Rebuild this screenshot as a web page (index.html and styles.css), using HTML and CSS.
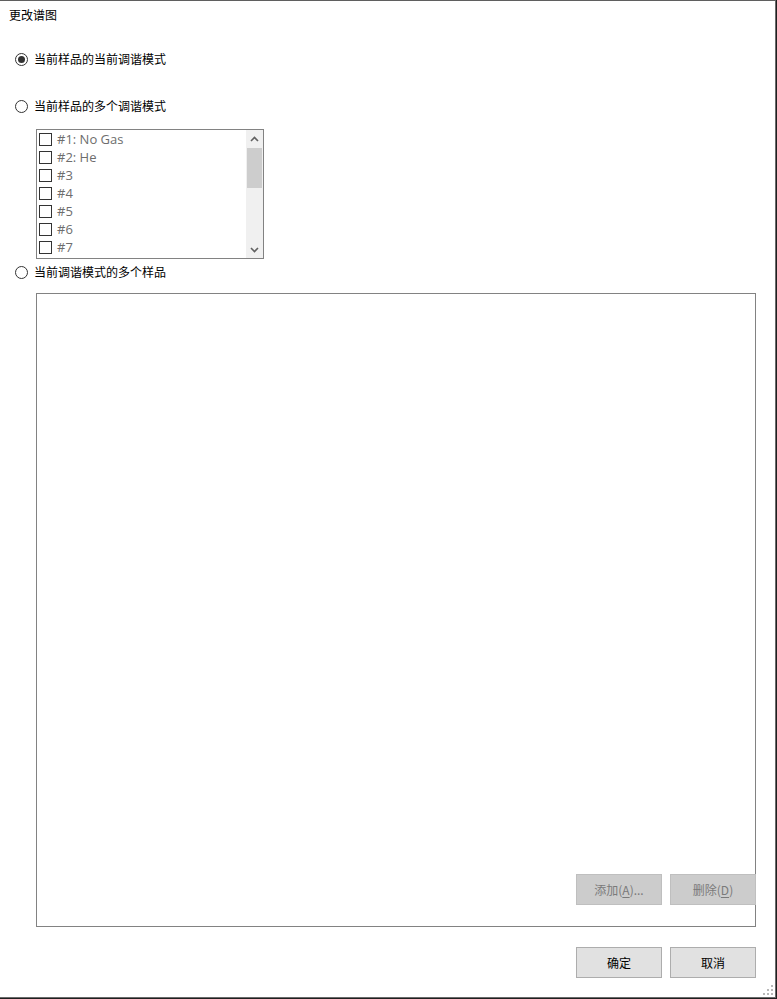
FILE: index.html
```html
<!DOCTYPE html>
<html lang="zh-CN">
<head>
<meta charset="utf-8">
<title>更改谱图</title>
<link rel="stylesheet" href="styles.css">
</head>
<body>
<div class="window">
  <div class="title">更改谱图</div>

  <label class="radio-row row1"><span class="radio checked"></span><span>当前样品的当前调谐模式</span></label>
  <label class="radio-row row2"><span class="radio"></span><span>当前样品的多个调谐模式</span></label>

  <div class="listbox">
    <div class="items">
      <div class="item"><span class="check"></span><span>#1: No Gas</span></div>
      <div class="item"><span class="check"></span><span>#2: He</span></div>
      <div class="item"><span class="check"></span><span>#3</span></div>
      <div class="item"><span class="check"></span><span>#4</span></div>
      <div class="item"><span class="check"></span><span>#5</span></div>
      <div class="item"><span class="check"></span><span>#6</span></div>
      <div class="item"><span class="check"></span><span>#7</span></div>
    </div>
    <div class="scrollbar">
      <div class="arrow"><svg width="9" height="6" viewBox="0 0 9 6"><path d="M1 5 L4.5 1.5 L8 5" fill="none" stroke="#606060" stroke-width="1.6"/></svg></div>
      <div class="thumb"></div>
      <div class="track"></div>
      <div class="arrow"><svg width="9" height="6" viewBox="0 0 9 6"><path d="M1 1 L4.5 4.5 L8 1" fill="none" stroke="#606060" stroke-width="1.6"/></svg></div>
    </div>
  </div>

  <label class="radio-row row3"><span class="radio"></span><span>当前调谐模式的多个样品</span></label>

  <div class="panel">
    <div class="btns">
      <button class="btn disabled">添加(<u>A</u>)...</button>
      <button class="btn disabled">删除(<u>D</u>)</button>
    </div>
  </div>

  <div class="footer">
    <button class="btn">确定</button>
    <button class="btn">取消</button>
  </div>

  <svg class="grip" width="12" height="12" viewBox="0 0 12 12">
    <rect x="9" y="1" width="2" height="2" fill="#b8b8b8"/>
    <rect x="5" y="5" width="2" height="2" fill="#b8b8b8"/>
    <rect x="9" y="5" width="2" height="2" fill="#b8b8b8"/>
    <rect x="1" y="9" width="2" height="2" fill="#b8b8b8"/>
    <rect x="5" y="9" width="2" height="2" fill="#b8b8b8"/>
    <rect x="9" y="9" width="2" height="2" fill="#b8b8b8"/>
  </svg>
</div>
</body>
</html>
```

FILE: styles.css
```css
* { box-sizing: border-box; }
html, body {
  margin: 0;
  padding: 0;
  background: #1f1f1f;
}
body {
  width: 777px;
  height: 999px;
  overflow: hidden;
  font-family: "Noto Sans CJK SC", "Noto Sans", sans-serif;
  font-size: 12px;
  color: #000;
}
.window {
  position: relative;
  width: 776px;
  height: 998px;
  background: #fff;
  border-top: 1px solid #5f5f5f;
  border-right: 1px solid #6a6a6a;
  border-bottom: 1px solid #6a6a6a;
  display: flex;
  flex-direction: column;
  align-items: flex-start;
}
.title {
  padding: 5px 0 0 9px;
  line-height: 18px;
  height: 23px;
}
.radio-row {
  display: flex;
  align-items: center;
  gap: 6px;
  height: 18px;
  line-height: 18px;
  margin-left: 15px;
}
.row1 { margin-top: 26px; }
.row2 { margin-top: 29px; }
.row3 { margin-top: 4px; }
.radio {
  width: 13px;
  height: 13px;
  border: 1px solid #333;
  border-radius: 50%;
  display: flex;
  align-items: center;
  justify-content: center;
  background: #fff;
}
.radio.checked::after {
  content: "";
  width: 7px;
  height: 7px;
  border-radius: 50%;
  background: #333;
}
.listbox {
  margin: 14px 0 0 36px;
  width: 228px;
  height: 130px;
  border: 1px solid #828282;
  display: flex;
  background: #fff;
}
.items {
  flex: 1;
  padding-left: 2px;
  overflow: hidden;
}
.item {
  height: 18px;
  display: flex;
  align-items: center;
  gap: 5px;
  font-family: "Open Sans", "Noto Sans", sans-serif;
  font-size: 13px;
  color: #6d6d6d;
}
.check {
  width: 13px;
  height: 13px;
  border: 1px solid #333;
  background: #fff;
  flex: none;
}
.scrollbar {
  width: 17px;
  background: #f0f0f0;
  display: flex;
  flex-direction: column;
}
.arrow {
  height: 17px;
  display: flex;
  align-items: center;
  justify-content: center;
}
.thumb {
  height: 40px;
  margin: 1px 1px 0;
  background: #cdcdcd;
}
.track { flex: 1; }
.panel {
  margin: 12px 0 0 36px;
  width: 720px;
  height: 634px;
  border: 1px solid #828282;
  display: flex;
  align-items: flex-end;
  justify-content: flex-end;
  padding-bottom: 21px;
}
.btns, .footer {
  display: flex;
  gap: 8px;
}
.btns { margin-right: -1px; }
.footer {
  margin: 20px 0 0 576px;
}
.btn {
  width: 86px;
  height: 31px;
  border: 1px solid #adadad;
  background: #e1e1e1;
  font-family: "Noto Sans CJK SC", "Noto Sans", sans-serif;
  font-size: 12px;
  color: #000;
  padding: 0;
  margin: 0;
}
.btn.disabled {
  background: #cccccc;
  border-color: #bfbfbf;
  color: #7a7a7a;
}
.btn u { text-underline-offset: 2px; }
.grip {
  position: absolute;
  right: 1px;
  bottom: 1px;
}
```
